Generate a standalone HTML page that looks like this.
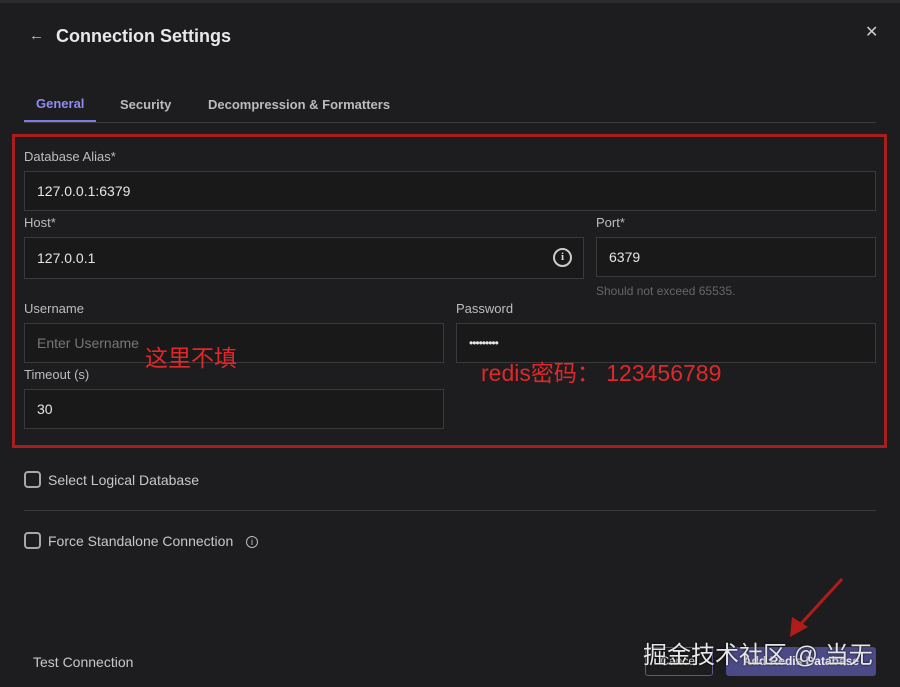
<!DOCTYPE html>
<html><head><meta charset="utf-8"><style>
*{box-sizing:border-box;margin:0;padding:0}
body{width:900px;height:687px;background:#1d1d1f;font-family:"Liberation Sans","Noto Sans CJK SC",sans-serif;color:#ddd;position:relative;overflow:hidden}
.a{position:absolute}
.top{left:0;top:0;width:900px;height:3px;background:#2c2c2e}
.lbl{font-size:13px;color:#bdbdbd}
.inp{background:#191919;border:1px solid #3a3a3a;font-size:14px;color:#e6e6e6;padding-left:12px;display:flex;align-items:center}
.red{color:#e0282a;font-size:23px}
.cb{width:17px;height:17px;border:2px solid #a8a8a8;border-radius:4px}
</style></head><body>
<div class="a top"></div>
<div class="a" style="left:29px;top:27px;font-size:15px;color:#bbb">←</div>
<div class="a" style="left:56px;top:26px;font-size:18px;font-weight:bold;color:#e8e8e8">Connection Settings</div>
<div class="a" style="left:865px;top:22px;font-size:16px;color:#ccc">✕</div>
<div class="a" style="left:36px;top:96px;font-size:13px;font-weight:bold;color:#8d8cf0">General</div>
<div class="a" style="left:120px;top:97px;font-size:13px;font-weight:bold;color:#bbb">Security</div>
<div class="a" style="left:208px;top:97px;font-size:13px;font-weight:bold;color:#bbb">Decompression &amp; Formatters</div>
<div class="a" style="left:24px;top:122px;width:852px;height:1px;background:#3a3a3a"></div>
<div class="a" style="left:24px;top:120px;width:72px;height:2px;background:#7d7cdc"></div>
<div class="a" style="left:12px;top:134px;width:875px;height:314px;border:3px solid #a81e1e"></div>
<div class="a lbl" style="left:24px;top:149px">Database Alias*</div>
<div class="a inp" style="left:24px;top:171px;width:852px;height:40px">127.0.0.1:6379</div>
<div class="a lbl" style="left:24px;top:215px">Host*</div>
<div class="a inp" style="left:24px;top:237px;width:560px;height:42px">127.0.0.1</div>
<div class="a" style="left:553px;top:248px;width:19px;height:19px;border:2px solid #ccc;border-radius:50%;font-size:11px;text-align:center;line-height:15px;color:#ddd;font-weight:bold;font-family:'Liberation Serif',serif">i</div>
<div class="a lbl" style="left:596px;top:215px">Port*</div>
<div class="a inp" style="left:596px;top:237px;width:280px;height:40px">6379</div>
<div class="a" style="left:596px;top:284px;font-size:12px;color:#666">Should not exceed 65535.</div>
<div class="a lbl" style="left:24px;top:301px">Username</div>
<div class="a inp" style="left:24px;top:323px;width:420px;height:40px;color:#777">Enter Username</div>
<div class="a lbl" style="left:456px;top:301px">Password</div>
<div class="a inp" style="left:456px;top:323px;width:420px;height:40px;font-size:12px;letter-spacing:-1px">•••••••••</div>
<div class="a red" style="left:145px;top:339px">这里不填</div>
<div class="a red" style="left:481px;top:354px">redis密码： 123456789</div>
<div class="a lbl" style="left:24px;top:367px">Timeout (s)</div>
<div class="a inp" style="left:24px;top:389px;width:420px;height:40px">30</div>
<div class="a cb" style="left:24px;top:471px"></div>
<div class="a" style="left:48px;top:472px;font-size:14px;color:#c8c8c8">Select Logical Database</div>
<div class="a" style="left:24px;top:510px;width:852px;height:1px;background:#3a3a3a"></div>
<div class="a cb" style="left:24px;top:532px"></div>
<div class="a" style="left:48px;top:533px;font-size:14px;color:#c8c8c8">Force Standalone Connection</div>
<div class="a" style="left:246px;top:536px;width:12px;height:12px;border:1px solid #bbb;border-radius:50%;font-size:9px;text-align:center;line-height:10px;color:#ccc">i</div>
<div class="a" style="left:33px;top:654px;font-size:14px;color:#c8c8c8">Test Connection</div>
<div class="a" style="left:645px;top:647px;width:68px;height:29px;border:1px solid #5a5a8a;border-radius:3px;font-size:12px;text-align:center;line-height:27px;color:#ddd">Cancel</div>
<div class="a" style="left:726px;top:647px;width:150px;height:29px;background:#4b4a86;border-radius:3px;font-size:12px;text-align:center;line-height:29px;color:#eee;font-weight:bold">Add Redis Database</div>
<div class="a" style="left:643px;top:635px;font-size:24px;color:#e6e6e6;text-shadow:0 0 2px #000">掘金技术社区 @ 当无</div>
<svg class="a" style="left:780px;top:575px" width="70" height="70"><line x1="62" y1="4" x2="18" y2="52" stroke="#b01c1c" stroke-width="3"/><polygon points="10,62 12,42 28,52" fill="#b01c1c"/></svg>
</body></html>
